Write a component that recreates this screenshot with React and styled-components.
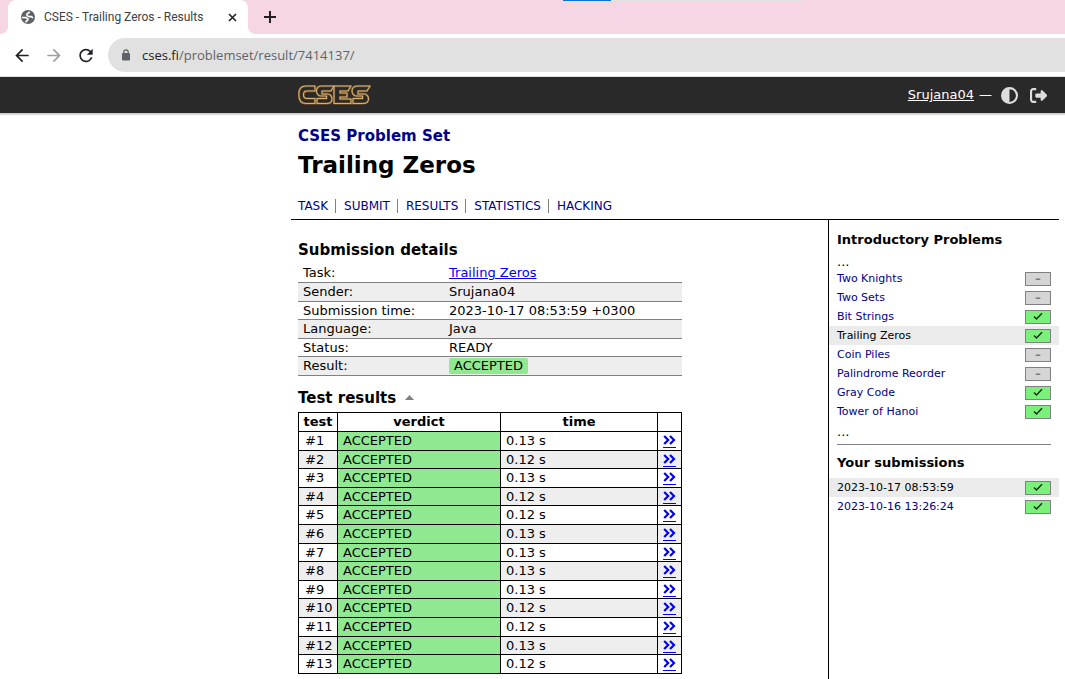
import React from "react";
import styled, { createGlobalStyle } from "styled-components";
import { FaCircleHalfStroke, FaRightFromBracket, FaMinus } from "react-icons/fa6";
import { MdArrowBack, MdArrowForward, MdRefresh } from "react-icons/md";

const GlobalStyle = createGlobalStyle`
  * { box-sizing: border-box; }
  html, body, #root { height: 100%; }
  body {
    margin: 0;
    background: #fff;
    color: #000;
    font-family: Verdana, "DejaVu Sans", sans-serif;
    font-size: 13px;
    overflow: hidden;
  }
  a { color: inherit; }
  h1, h2, h3, p, ul { margin: 0; padding: 0; }
`;

const Screen = styled.div`
  display: flex;
  flex-direction: column;
  height: 100%;
`;

const TabStrip = styled.div`
  position: relative;
  flex: none;
  display: flex;
  align-items: flex-end;
  height: 34px;
  padding-left: 8px;
  background: #f6d5e4;
`;

const LoadBar = styled.div`
  position: absolute;
  top: 0;
  left: 563px;
  width: 241px;
  height: 1px;
  background: linear-gradient(to right, #0b74d4 48px, #e3e0e2 48px);
`;

const Tab = styled.div`
  position: relative;
  display: flex;
  align-items: center;
  width: 240px;
  height: 34px;
  padding: 0 8px 0 12px;
  gap: 8px;
  background: #fff;
  border-radius: 8px 8px 0 0;
  color: #5f6368;
  &::before, &::after {
    content: "";
    position: absolute;
    bottom: 0;
    width: 8px;
    height: 8px;
  }
  &::before {
    left: -8px;
    background: radial-gradient(circle at 0 0, transparent 8px, #fff 8px);
  }
  &::after {
    right: -8px;
    background: radial-gradient(circle at 100% 0, transparent 8px, #fff 8px);
  }
`;

const TabTitle = styled.span`
  flex: 1;
  white-space: nowrap;
  font: 12px/16px Roboto, sans-serif;
  color: #3c4043;
`;

const IconButton = styled.button`
  flex: none;
  display: flex;
  align-items: center;
  justify-content: center;
  width: ${(p) => p.$size || 16}px;
  height: ${(p) => p.$size || 16}px;
  padding: 0;
  border: 0;
  background: none;
  color: ${(p) => p.$color || "#202124"};
`;

const NewTab = styled.div`
  display: flex;
  align-items: center;
  height: 34px;
  padding-left: 12px;
`;

const Toolbar = styled.div`
  flex: none;
  display: flex;
  align-items: center;
  gap: 12px;
  height: 43px;
  padding-left: 12px;
  border-bottom: 1px solid #dcdcdc;
`;

const AddressBar = styled.div`
  flex: 1;
  display: flex;
  align-items: center;
  gap: 11px;
  height: 34px;
  padding-left: 13px;
  border-radius: 17px 0 0 17px;
  background: #e1e1e1;
  color: #5f6368;
  font: 13px/20px "Open Sans", sans-serif;
  white-space: nowrap;
  b { font-weight: 400; color: #202124; }
`;

const SiteHeader = styled.header`
  flex: none;
  display: flex;
  align-items: center;
  justify-content: space-between;
  height: 37px;
  padding: 0 18px 0 298px;
  background: #292929;
  border-bottom: 1px solid #ccc;
  box-shadow: 0 1px 1px #ddd;
`;

const Account = styled.nav`
  display: flex;
  align-items: center;
  color: #fff;
  line-height: 16px;
  svg { color: #ddd; }
`;

const Dash = styled.span`
  margin: 0 9px 0 5px;
`;

const IconLink = styled.a`
  display: flex;
  & + & { margin-left: 12px; }
`;

const Page = styled.div`
  flex: 1;
  display: flex;
  flex-direction: column;
  margin: 0 6px 0 291px;
`;

const TitleBlock = styled.div`
  padding: 12px 7px 0;
  border-bottom: 1px solid #000;
`;

const Course = styled.h3`
  font-size: 15px;
  line-height: 20px;
  color: #00008b;
  a { text-decoration: none; }
`;

const Title = styled.h1`
  font-size: 23px;
  line-height: 32px;
  margin-top: 3px;
`;

const Sections = styled.ul`
  display: flex;
  list-style: none;
  margin: 18px 0 6px;
  font-size: 12px;
  line-height: 14px;
  color: #00008b;
  li + li {
    margin-left: 7px;
    padding-left: 8px;
    border-left: 1px solid #808080;
  }
  a { text-decoration: none; }
`;

const Columns = styled.div`
  flex: 1;
  display: flex;
`;

const Content = styled.main`
  flex: 1;
  padding: 20px 146px 0 7px;
`;

const Heading = styled.h2`
  display: flex;
  align-items: center;
  gap: 9px;
  font-size: 15px;
  line-height: 20px;
  margin-bottom: 4px;
`;

const Details = styled.table`
  width: 100%;
  border-collapse: collapse;
  margin-bottom: 12px;
  line-height: 16px;
  td, th { padding: 1px 5px 0; text-align: left; font-weight: 400; }
  th { width: 146px; }
  tr { height: 19px; border-bottom: 1px solid #808080; }
  tr:nth-child(odd) { height: 18px; }
  tr:nth-child(even) { background: #eee; }
  a { color: #0000ee; }
`;

const Accepted = styled.span`
  display: block;
  width: fit-content;
  padding: 0 5px;
  border-radius: 2px;
  background: #90e990;
`;

const Results = styled.table`
  width: 100%;
  table-layout: fixed;
  border-collapse: collapse;
  line-height: 16px;
  th, td { padding: 1px 5px 0; border: 1px solid #000; text-align: left; }
  th { text-align: center; padding: 1px 0 0; }
  tr { height: 19px; }
  tbody tr:nth-child(5n + 2), tbody tr:nth-child(5n + 4) { height: 18px; }
  tbody tr:nth-child(even) { background: #eee; }
  tbody td:first-child { padding-left: 6px; }
`;

const Col = styled.col`
  width: ${(p) => p.$width}px;
`;

const Verdict = styled.td`
  background: #90e990;
`;

const More = styled.a`
  display: block;
  width: 13px;
  height: 14px;
  padding-top: 1px;
  border-bottom: 1px solid #0000ee;
  svg { display: block; }
`;

const Sidebar = styled.aside`
  flex: none;
  width: 231px;
  padding-top: 10px;
  border-left: 1px solid #000;
  font-size: 11px;
  line-height: 19px;
`;

const SideTitle = styled.h3`
  padding: 0 8px;
  font-size: 13px;
  line-height: 20px;
  margin-bottom: 5px;
`;

const Dots = styled.p`
  padding: 0 8px;
  font-size: 13px;
  line-height: 14px;
`;

const ItemList = styled.nav`
  margin-bottom: 4px;
`;

const Item = styled.a`
  display: flex;
  align-items: center;
  justify-content: space-between;
  padding: 0 8px;
  color: ${(p) => (p.$current ? "#000" : "#00008b")};
  background: ${(p) => (p.$current ? "#ebebeb" : "transparent")};
  text-decoration: none;
`;

const Badge = styled.span`
  display: flex;
  align-items: center;
  justify-content: center;
  width: 26px;
  height: 14px;
  border: 1px solid #808080;
  background: ${(p) => (p.$done ? "#7bf07b" : "#d5d5d5")};
  color: #222;
`;

const Rule = styled.hr`
  height: 1px;
  margin: 5px 8px 8px;
  border: 0;
  background: #808080;
`;

const sections = ["TASK", "SUBMIT", "RESULTS", "STATISTICS", "HACKING"];
const times = ["0.13", "0.12", "0.13", "0.12", "0.12", "0.13", "0.13", "0.13", "0.13", "0.12", "0.12", "0.13", "0.12"];
const problems = [
  ["Two Knights", false],
  ["Two Sets", false],
  ["Bit Strings", true],
  ["Trailing Zeros", true],
  ["Coin Piles", false],
  ["Palindrome Reorder", false],
  ["Gray Code", true],
  ["Tower of Hanoi", true],
];

function Logo() {
  return (
    <svg width="73" height="20" viewBox="0 0 73 20" fill="none" strokeLinejoin="round" role="img" aria-label="CSES">
      <defs>
        <g id="cses-letters">
          <path d="M17 1H8C3 1 .8 4 .8 9.500S3 18.500 8 18.500H17V13.500H9C6.500 13.500 5.500 12 5.500 9.700S6.500 6 9 6H17Z" />
          <path d="M36 1H24C20 1 18.500 3 18.500 6S20.500 11 23 11H28.500V13.500H19V18.500H29C32.500 18.500 34 16.500 34 14S32.500 9 29.500 9H24V6H33Z" />
          <path d="M36 1H53L50 6H42V8H49V12H42V14H53V18.500H36Z" />
          <path d="M72 1H60C56 1 54 3 54 6S56 11 59 11H64.500V13.500H55V18.500H65C68.500 18.500 70.500 16.500 70.500 14S69 9 66 9H60V6H69Z" />
        </g>
      </defs>
      <use href="#cses-letters" stroke="#6b4a22" strokeWidth="2.400" />
      <use href="#cses-letters" stroke="#d3b177" strokeWidth="1.100" />
    </svg>
  );
}

function Globe() {
  return (
    <svg width="16" height="16" viewBox="0 0 16 16">
      <circle cx="8" cy="8" r="7" fill="#5f6368" />
      <path d="M9.800 3L7 4.800V6.500L9 7.600H11.500L13 8.800" fill="none" stroke="#fff" strokeWidth="1.600" strokeLinejoin="round" />
      <path d="M2 8.500H5.500L7.800 9.800V11.200L6 12.400V13.400" fill="none" stroke="#fff" strokeWidth="1.600" strokeLinejoin="round" />
    </svg>
  );
}

function Lock() {
  return (
    <svg width="10" height="12" viewBox="0 0 10 12">
      <rect x="1" y="4" width="8" height="7.500" rx="1" fill="#5f6368" />
      <path d="M2.800 4.500V3A2.200 2.200 0 0 1 7.200 3V4.500" fill="none" stroke="#5f6368" strokeWidth="1.200" />
    </svg>
  );
}

function DoubleChevron() {
  return (
    <svg width="13" height="10" viewBox="0 0 13 10" fill="none" stroke="#0000ee" strokeWidth="2.200">
      <path d="M1.200 1L5.200 5L1.200 9M7 1L11 5L7 9" />
    </svg>
  );
}

function Check() {
  return (
    <svg width="10" height="9" viewBox="0 0 10 9" fill="none" stroke="#1c301c" strokeWidth="1.500">
      <path d="M1 4.500L3.500 7L9 1.200" />
    </svg>
  );
}

function StatusItem({ label, done, current }) {
  return (
    <Item href="#" $current={current}>
      {label}
      <Badge $done={done}>{done ? <Check /> : <FaMinus size={6} />}</Badge>
    </Item>
  );
}

export default function App() {
  return (
    <Screen>
      <GlobalStyle />
      <TabStrip>
        <LoadBar />
        <Tab>
          <Globe />
          <TabTitle>CSES - Trailing Zeros - Results</TabTitle>
          <IconButton aria-label="Close tab">
            <svg width="9" height="9" viewBox="0 0 9 9" stroke="currentColor" strokeWidth="1.600"><path d="M1 1L8 8M8 1L1 8" /></svg>
          </IconButton>
        </Tab>
        <NewTab>
          <IconButton $size={20} aria-label="New tab">
            <svg width="12" height="12" viewBox="0 0 12 12" stroke="currentColor" strokeWidth="2"><path d="M6 0V12M0 6H12" /></svg>
          </IconButton>
        </NewTab>
      </TabStrip>
      <Toolbar>
        <IconButton $size={20} aria-label="Back"><MdArrowBack size={21} /></IconButton>
        <IconButton $size={20} $color="#a0a0a0" aria-label="Forward"><MdArrowForward size={21} /></IconButton>
        <IconButton $size={20} aria-label="Reload"><MdRefresh size={21} /></IconButton>
        <AddressBar>
          <Lock />
          <span><b>cses.fi</b>/problemset/result/7414137/</span>
        </AddressBar>
      </Toolbar>
      <SiteHeader>
        <Logo />
        <Account>
          <a href="#">Srujana04</a>
          <Dash>—</Dash>
          <IconLink href="#" aria-label="Dark mode"><FaCircleHalfStroke size={17} /></IconLink>
          <IconLink href="#" aria-label="Log out"><FaRightFromBracket size={17} /></IconLink>
        </Account>
      </SiteHeader>
      <Page>
        <TitleBlock>
          <Course><a href="#">CSES Problem Set</a></Course>
          <Title>Trailing Zeros</Title>
          <Sections>
            {sections.map((s) => <li key={s}><a href="#">{s}</a></li>)}
          </Sections>
        </TitleBlock>
        <Columns>
          <Content>
            <Heading>Submission details</Heading>
            <Details>
              <tbody>
                <tr><th scope="row">Task:</th><td><a href="#">Trailing Zeros</a></td></tr>
                <tr><th scope="row">Sender:</th><td>Srujana04</td></tr>
                <tr><th scope="row">Submission time:</th><td>2023-10-17 08:53:59 +0300</td></tr>
                <tr><th scope="row">Language:</th><td>Java</td></tr>
                <tr><th scope="row">Status:</th><td>READY</td></tr>
                <tr><th scope="row">Result:</th><td><Accepted>ACCEPTED</Accepted></td></tr>
              </tbody>
            </Details>
            <Heading>
              Test results
              <svg width="9" height="5" viewBox="0 0 9 5" fill="#808080"><path d="M0 5L4.500 0L9 5Z" /></svg>
            </Heading>
            <Results>
              <colgroup>
                <Col $width={39} />
                <Col $width={163} />
                <col />
                <Col $width={24} />
              </colgroup>
              <thead>
                <tr><th>test</th><th>verdict</th><th>time</th><th></th></tr>
              </thead>
              <tbody>
                {times.map((t, i) => (
                  <tr key={i}>
                    <td>#{i + 1}</td>
                    <Verdict>ACCEPTED</Verdict>
                    <td>{t} s</td>
                    <td><More href="#" aria-label={`Details of test ${i + 1}`}><DoubleChevron /></More></td>
                  </tr>
                ))}
              </tbody>
            </Results>
          </Content>
          <Sidebar>
            <SideTitle>Introductory Problems</SideTitle>
            <Dots>...</Dots>
            <ItemList>
              {problems.map(([name, done]) => (
                <StatusItem key={name} label={name} done={done} current={name === "Trailing Zeros"} />
              ))}
            </ItemList>
            <Dots>...</Dots>
            <Rule />
            <SideTitle>Your submissions</SideTitle>
            <ItemList>
              <StatusItem label="2023-10-17 08:53:59" done current />
              <StatusItem label="2023-10-16 13:26:24" done />
            </ItemList>
          </Sidebar>
        </Columns>
      </Page>
    </Screen>
  );
}
